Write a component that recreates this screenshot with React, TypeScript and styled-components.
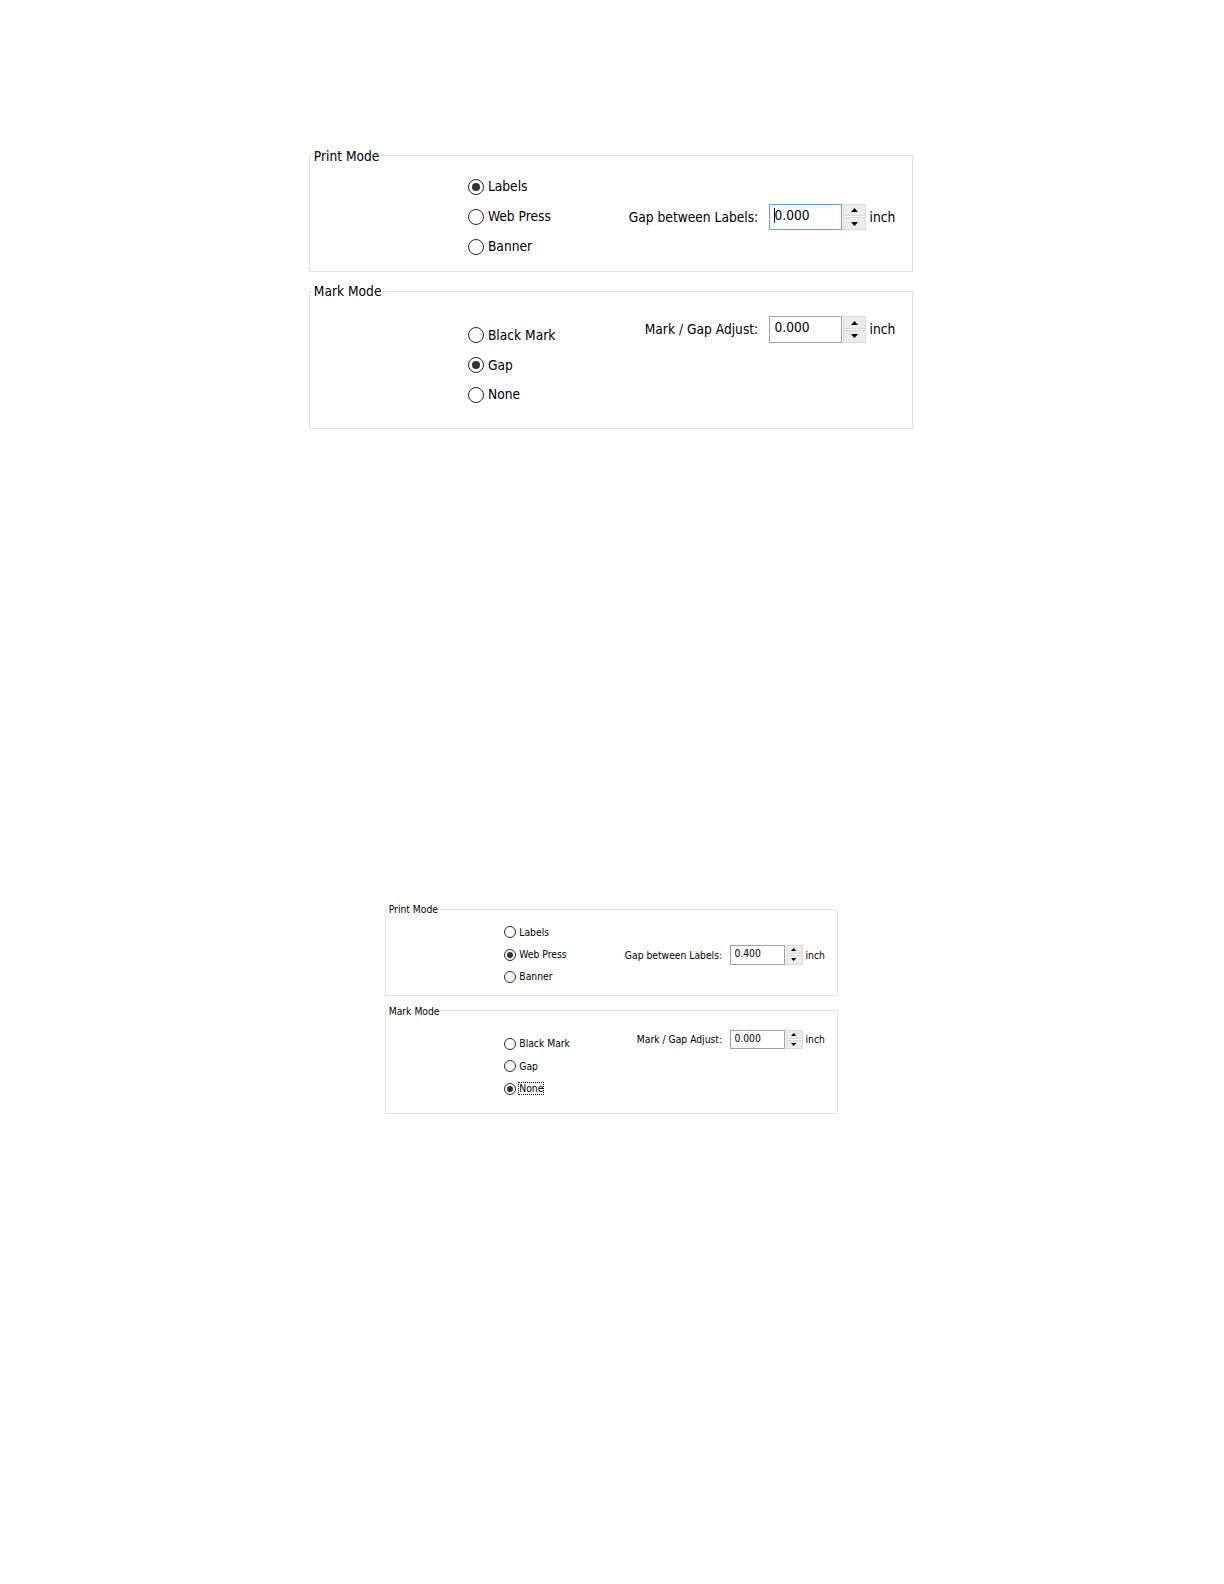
import styled, { createGlobalStyle } from 'styled-components';

type Option = { label: string; checked?: boolean; focused?: boolean };

type GroupProps = {
  title: string;
  options: Option[];
  fieldLabel: string;
  value: string;
  focused?: boolean;
  padTop: number;
  padBottom: number;
  listOffset: number;
  align: 'center' | 'flex-start';
};

const GlobalStyle = createGlobalStyle`
  html, body {
    margin: 0;
    padding: 0;
    background: #ffffff;
  }
  body {
    font-family: "DejaVu Sans Condensed", "Liberation Sans", Arial, sans-serif;
    color: #000000;
  }
`;

function Spinner() {
  return (
    <SpinBox>
      <SpinButton>
        <svg width="7" height="4" viewBox="0 0 7 4">
          <path d="M0 4 L3.5 0 L7 4 Z" fill="#000" />
        </svg>
      </SpinButton>
      <SpinButton>
        <svg width="7" height="4" viewBox="0 0 7 4">
          <path d="M0 0 L3.5 4 L7 0 Z" fill="#000" />
        </svg>
      </SpinButton>
    </SpinBox>
  );
}

function Group(props: GroupProps) {
  return (
    <Fieldset $padBottom={props.padBottom}>
      <Legend>{props.title}</Legend>
      <Body $padTop={props.padTop} $align={props.align}>
        <RadioList $offset={props.listOffset}>
          {props.options.map((opt) => (
            <RadioRow key={opt.label}>
              <Circle $checked={!!opt.checked} />
              <RadioText $focused={!!opt.focused}>{opt.label}</RadioText>
            </RadioRow>
          ))}
        </RadioList>
        <Field>
          <FieldLabel>{props.fieldLabel}</FieldLabel>
          <NumberBox $focused={!!props.focused}>
            {props.focused && <Caret />}
            {props.value}
          </NumberBox>
          <Spinner />
          <Unit>inch</Unit>
        </Field>
      </Body>
    </Fieldset>
  );
}

type DialogProps = {
  printMode: string;
  markMode: string;
  gap: string;
  adjust: string;
  gapFocused?: boolean;
  focusedMark?: string;
};

function Dialog(d: DialogProps) {
  return (
    <Stack>
      <Group
        title="Print Mode"
        options={['Labels', 'Web Press', 'Banner'].map((l) => ({
          label: l,
          checked: l === d.printMode,
        }))}
        fieldLabel="Gap between Labels:"
        value={d.gap}
        focused={d.gapFocused}
        padTop={8}
        padBottom={9}
        listOffset={0}
        align="center"
      />
      <Group
        title="Mark Mode"
        options={['Black Mark', 'Gap', 'None'].map((l) => ({
          label: l,
          checked: l === d.markMode,
          focused: l === d.focusedMark,
        }))}
        fieldLabel="Mark / Gap Adjust:"
        value={d.adjust}
        padTop={17}
        padBottom={18}
        listOffset={4}
        align="flex-start"
      />
    </Stack>
  );
}

export default function App() {
  return (
    <>
      <GlobalStyle />
      <Page>
        <Slot $left={305}>
          <Dialog
            printMode="Labels"
            markMode="Gap"
            gap="0.000"
            adjust="0.000"
            gapFocused
          />
        </Slot>
        <Slot $left={380} $top={468}>
          <Zoomed $scale={0.75}>
            <Dialog
              printMode="Web Press"
              markMode="None"
              gap="0.400"
              adjust="0.000"
              focusedMark="None"
            />
          </Zoomed>
        </Slot>
      </Page>
    </>
  );
}

// the screenshot was taken slightly enlarged; one factor for the whole sheet
const Page = styled.div`
  zoom: 1.0124;
  padding-top: 146px;
  display: flex;
  flex-direction: column;
  align-items: flex-start;
`;

const Slot = styled.div<{ $left: number; $top?: number }>`
  padding-left: ${(p) => p.$left}px;
  margin-top: ${(p) => p.$top ?? 0}px;
`;

const Zoomed = styled.div<{ $scale: number }>`
  zoom: ${(p) => p.$scale};
`;

const Stack = styled.div`
  width: 597px;
  display: flex;
  flex-direction: column;
  gap: 11px;
`;

const Fieldset = styled.fieldset<{ $padBottom: number }>`
  margin: 0;
  padding: 0 0 ${(p) => p.$padBottom}px 0;
  border: 1px solid #e3e3e3;
  box-sizing: border-box;
  width: 597px;
  min-width: 0;
`;

const Legend = styled.legend`
  margin-left: 3px;
  padding: 0 1px;
  font-size: 13.5px;
  line-height: 16px;
`;

const Body = styled.div<{ $padTop: number; $align: string }>`
  display: flex;
  align-items: ${(p) => p.$align};
  padding: ${(p) => p.$padTop}px 0 0 156px;
`;

const RadioList = styled.div<{ $offset: number }>`
  width: 139px;
  margin-top: ${(p) => p.$offset}px;
  display: flex;
  flex-direction: column;
`;

const RadioRow = styled.div`
  height: 29.5px;
  display: flex;
  align-items: center;
  gap: 4px;
`;

const Circle = styled.span<{ $checked: boolean }>`
  width: 16px;
  height: 16px;
  box-sizing: border-box;
  border: 1px solid #2b2b2b;
  border-radius: 50%;
  background: #ffffff;
  display: flex;
  align-items: center;
  justify-content: center;
  flex-shrink: 0;

  &::after {
    content: '';
    display: ${(p) => (p.$checked ? 'block' : 'none')};
    width: 8px;
    height: 8px;
    border-radius: 50%;
    background: #333333;
  }
`;

const RadioText = styled.span<{ $focused: boolean }>`
  font-size: 13.5px;
  line-height: 15px;
  outline: ${(p) => (p.$focused ? '1px dotted #000' : 'none')};
`;

const Field = styled.div`
  display: flex;
  align-items: center;
`;

const FieldLabel = styled.span`
  width: 148px;
  text-align: right;
  font-size: 13.5px;
  margin-right: 11px;
`;

const NumberBox = styled.div<{ $focused: boolean }>`
  width: 72px;
  height: 26px;
  box-sizing: border-box;
  border: 1px solid ${(p) => (p.$focused ? '#6a9fd8' : '#a0a0a0')};
  padding: 3px 0 0 4px;
  font-size: 13.5px;
  line-height: 15px;
  display: flex;
  align-items: flex-start;
`;

const Caret = styled.span`
  width: 1px;
  height: 15px;
  background: #000;
  margin-right: -1px;
`;

const SpinBox = styled.div`
  width: 22px;
  height: 26px;
  margin-left: 1px;
  display: flex;
  flex-direction: column;
  gap: 1px;
`;

const SpinButton = styled.div`
  flex: 1;
  background: #ececec;
  border: 1px solid #dadada;
  display: flex;
  align-items: center;
  justify-content: center;
`;

const Unit = styled.span`
  font-size: 13.5px;
  margin-left: 4px;
`;
